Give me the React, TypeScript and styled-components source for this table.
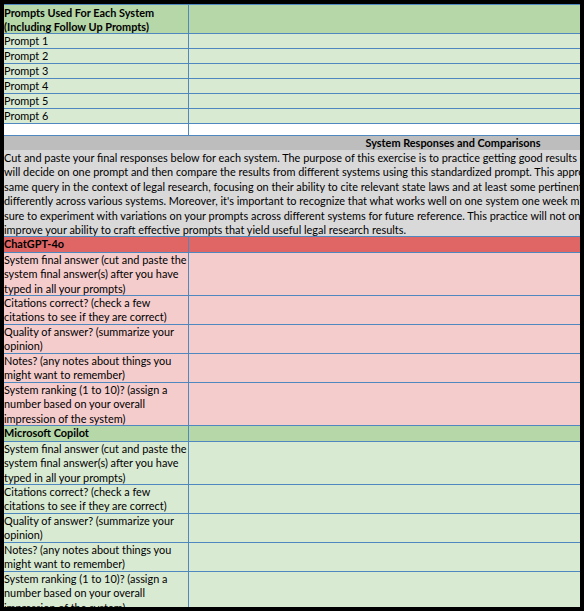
import styled, { createGlobalStyle } from "styled-components"

const GlobalStyle = createGlobalStyle`
  *, *::before, *::after {
    box-sizing: border-box;
  }
  html, body {
    margin: 0;
    padding: 0;
    background: #000;
  }
  body {
    font-family: Lato, "Liberation Sans", sans-serif;
    font-size: 10.9px;
    color: #000;
  }
`

const line = "#4f87bf"

type Tone = "head" | "light" | "white" | "red" | "pink"

const tones: Record<Tone, string> = {
  head: "#b6d7a8",
  light: "#d9ead3",
  white: "#ffffff",
  red: "#e06666",
  pink: "#f4cccc",
}

const prompts = ["Prompt 1", "Prompt 2", "Prompt 3", "Prompt 4", "Prompt 5", "Prompt 6"]

const questions: { lines: string[]; h: number }[] = [
  {
    lines: [
      "System final answer (cut and paste the",
      "system final answer(s) after you have",
      "typed in all your prompts)",
    ],
    h: 43,
  },
  { lines: ["Citations correct? (check a few", "citations to see if they are correct)"], h: 29 },
  { lines: ["Quality of answer? (summarize your", "opinion)"], h: 29 },
  { lines: ["Notes? (any notes about things you", "might want to remember)"], h: 29 },
  {
    lines: [
      "System ranking (1 to 10)? (assign a",
      "number based on your overall",
      "impression of the system)",
    ],
    h: 43,
  },
]

const paragraph = [
  "Cut and paste your final responses below for each system. The purpose of this exercise is to practice getting good results c",
  "will decide on one prompt and then compare the results from different systems using this standardized prompt. This approach",
  "same query in the context of legal research, focusing on their ability to cite relevant state laws and at least some pertinent",
  "differently across various systems. Moreover, it's important to recognize that what works well on one system one week might",
  "sure to experiment with variations on your prompts across different systems for future reference. This practice will not only",
  "improve your ability to craft effective prompts that yield useful legal research results.",
]

const SystemBlock = ({ name, head, body }: { name: string; head: Tone; body: Tone }) => (
  <>
    <Row $tone={head} $h={16}>
      <Label $bold>{name}</Label>
      <Cell />
    </Row>
    {questions.map((q) => (
      <Row key={q.lines[0]} $tone={body} $h={q.h}>
        <Label>
          {q.lines.map((l) => (
            <TextLine key={l}>{l}</TextLine>
          ))}
        </Label>
        <Cell />
      </Row>
    ))}
  </>
)

const App = () => {
  return (
    <>
      <GlobalStyle />
      <Frame>
        <Sheet>
          <Row $tone="head" $h={29}>
            <Label $bold $top={1}>
              <TextLine>Prompts Used For Each System</TextLine>
              <TextLine>(Including Follow Up Prompts)</TextLine>
            </Label>
            <Cell />
          </Row>
          {prompts.map((p) => (
            <Row key={p} $tone="light" $h={15}>
              <Label>{p}</Label>
              <Cell />
            </Row>
          ))}
          <Row $tone="white" $h={12}>
            <Label />
            <Cell />
          </Row>
          <TitleBar>
            <Title>System Responses and Comparisons</Title>
          </TitleBar>
          <Intro>
            {paragraph.map((l) => (
              <TextLine key={l}>{l}</TextLine>
            ))}
          </Intro>
          <SystemBlock name="ChatGPT-4o" head="red" body="pink" />
          <SystemBlock name="Microsoft Copilot" head="head" body="light" />
        </Sheet>
      </Frame>
    </>
  )
}

const Frame = styled.div`
  width: 584px;
  height: 611px;
  padding: 4px;
  background: #000;
`
const Sheet = styled.div`
  width: 576px;
  height: 603px;
  overflow: hidden;
  border-top: 1px solid ${line};
  display: flex;
  flex-direction: column;
`
const Row = styled.div<{ $tone: Tone; $h: number }>`
  flex: none;
  display: grid;
  grid-template-columns: 185px 1fr;
  height: ${(p) => p.$h}px;
  background: ${(p) => tones[p.$tone]};
  border-bottom: 1px solid ${line};
`
const Label = styled.div<{ $bold?: boolean; $top?: number }>`
  border-right: 1px solid ${line};
  padding-top: ${(p) => p.$top ?? 0}px;
  font-weight: ${(p) => (p.$bold ? 700 : 400)};
  line-height: 14.3px;
  white-space: nowrap;
  overflow: hidden;
`
const Cell = styled.div``
const TextLine = styled.div`
  white-space: nowrap;
`
const TitleBar = styled.div`
  flex: none;
  height: 14px;
  background: #bdbdbd;
  overflow: hidden;
`
const Title = styled.div`
  width: 898px;
  text-align: center;
  font-weight: 700;
  line-height: 14px;
`
const Intro = styled.div`
  flex: none;
  height: 87px;
  padding-top: 1px;
  background: #d9d9d9;
  border-bottom: 1px solid ${line};
  line-height: 14.4px;
  overflow-x: clip;
  overflow-y: visible;
`

export default App
